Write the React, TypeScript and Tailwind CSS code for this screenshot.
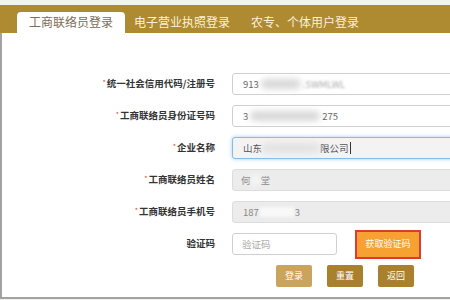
import React from 'react';

function Blur({ w, className = '' }: { w: number; className?: string }) {
  return (
    <span
      className={`inline-block h-[10px] rounded-full bg-[#d8d8d8] blur-[3px] ${className}`}
      style={{ width: w }}
    />
  );
}

function Label({ text, required = true }: { text: string; required?: boolean }) {
  return (
    <div className="w-[213px] shrink-0 pr-0 text-right text-[9.5px] font-bold leading-none text-[#333]">
      {required && <span className="mr-[1px] align-top text-[7px] font-normal text-[#e0463b]">*</span>}
      {text}
    </div>
  );
}

export default function App() {
  return (
    <div className="h-[300px] w-[450px] overflow-hidden bg-[#f4f2ec] font-['Noto_Sans_CJK_SC','Noto_Sans',sans-serif]">
      {/* Tabs */}
      <div className="mt-[5px] flex h-[28px] items-end bg-[#ae8a30] pl-[17px]">
        <div className="flex h-[21px] w-[108px] items-center justify-center rounded-t-[4px] bg-white pb-[1px] text-[12px] text-[#806b58]">
          工商联络员登录
        </div>
        <div className="flex h-[21px] items-center pl-[9px] pb-[1px] text-[12px] text-[#fbf1da]">电子营业执照登录</div>
        <div className="flex h-[21px] items-center pl-[21px] pb-[1px] text-[12px] text-[#fbf1da]">农专、个体用户登录</div>
      </div>

      {/* Form */}
      <div className="h-[266px] border-b-2 border-l-2 border-[#a3a3a3] bg-white pt-[40px]">
        <div className="flex flex-col gap-[10px]">
          <div className="flex h-[22px] items-center gap-[17px]">
            <Label text="统一社会信用代码/注册号" />
            <div className="flex h-[22px] w-[260px] shrink-0 items-center gap-[2px] rounded-[3px] border border-[#d0d0d0] bg-white pl-[10px] text-[9.5px] text-[#666]">
              913
              <Blur w={40} />
              <span className="text-[#aaa] blur-[1px]">.SWMLWL</span>
            </div>
          </div>

          <div className="flex h-[22px] items-center gap-[17px]">
            <Label text="工商联络员身份证号码" />
            <div className="flex h-[22px] w-[260px] shrink-0 items-center gap-[2px] rounded-[3px] border border-[#d0d0d0] bg-white pl-[10px] text-[9.5px] text-[#666]">
              3
              <Blur w={70} />
              275
            </div>
          </div>

          <div className="flex h-[22px] items-center gap-[17px]">
            <Label text="企业名称" />
            <div className="flex h-[22px] w-[260px] shrink-0 items-center rounded-[3px] border border-[#8cb8e6] bg-[#f3f3f3] pl-[10px] text-[9.5px] text-[#555] shadow-[0_0_4px_rgba(102,175,233,0.6)]">
              山东
              <Blur w={58} className="bg-[#e2e2e2]" />
              限公司
              <span className="ml-[1px] inline-block h-[12px] w-[1px] bg-[#333]" />
            </div>
          </div>

          <div className="flex h-[22px] items-center gap-[17px]">
            <Label text="工商联络员姓名" />
            <div className="flex h-[22px] w-[260px] shrink-0 items-center rounded-[3px] border border-[#dcdcdc] bg-[#ececec] pl-[8px] text-[9.5px] text-[#888]">
              何
              <Blur w={10} className="bg-[#f8f8f8]" />
              堂
            </div>
          </div>

          <div className="flex h-[22px] items-center gap-[17px]">
            <Label text="工商联络员手机号" />
            <div className="flex h-[22px] w-[260px] shrink-0 items-center gap-[1px] rounded-[3px] border border-[#dcdcdc] bg-[#ececec] pl-[10px] text-[9.5px] text-[#888]">
              187
              <span className="inline-block h-[10px] w-[34px] bg-[#f8f8f8] blur-[1px]" />
              3
            </div>
          </div>

          <div className="flex h-[22px] items-center">
            <Label text="验证码" required={false} />
            <div className="ml-[17px] flex h-[22px] w-[105px] shrink-0 items-center rounded-[3px] border border-[#d0d0d0] bg-white pl-[9px] text-[9.5px] text-[#aaa]">
              验证码
            </div>
            <button className="ml-[18px] flex h-[29px] w-[66px] shrink-0 items-center justify-center border-2 border-[#dd3a33] bg-[#f7a132] text-[9px] text-white">
              获取验证码
            </button>
          </div>
        </div>

        <div className="mt-[10px] flex gap-[15px] pl-[274px]">
          <button className="flex h-[22px] w-[36px] items-center justify-center rounded-[2px] bg-[#caa45c] text-[9px] text-white">登录</button>
          <button className="flex h-[22px] w-[36px] items-center justify-center rounded-[2px] bg-[#a8802e] text-[9px] text-white">重置</button>
          <button className="flex h-[22px] w-[36px] items-center justify-center rounded-[2px] bg-[#a8802e] text-[9px] text-white">返回</button>
        </div>
      </div>
    </div>
  );
}
